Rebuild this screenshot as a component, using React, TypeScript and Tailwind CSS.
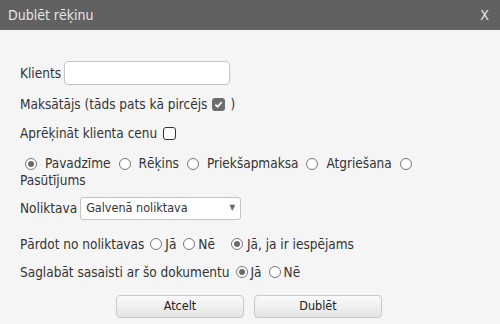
import React from "react";

const font = { fontFamily: '"DejaVu Sans Condensed", "DejaVu Sans", sans-serif' };

function Radio({ checked = false }: { checked?: boolean }) {
  return (
    <span className="inline-grid place-items-center h-[12px] w-[12px] rounded-full border border-[#767676] bg-white align-[-1px]">
      {checked && <span className="h-[6px] w-[6px] rounded-full bg-[#6b6b6b]" />}
    </span>
  );
}

function Check({ checked = false }: { checked?: boolean }) {
  if (checked)
    return (
      <span className="inline-grid place-items-center h-[13px] w-[13px] rounded-[3px] bg-[#6d6d6d] align-[-1px]">
        <svg viewBox="0 0 10 10" className="h-[9px] w-[9px]">
          <path d="M1.5 5.2 L4 7.6 L8.6 2.4" stroke="white" strokeWidth="1.8" fill="none" />
        </svg>
      </span>
    );
  return <span className="inline-block h-[13px] w-[13px] rounded-[3px] border border-[#333] bg-white align-[-1px]" />;
}

export default function App() {
  return (
    <div className="w-[500px] h-[324px] bg-[#f5f5f5] text-[#333] text-[13.5px] overflow-hidden" style={font}>
      <div className="h-[30px] bg-[#616161] flex items-center justify-between px-[8px] text-[#e6e6e6] text-[14px]">
        <span>Dublēt rēķinu</span>
        <span className="pr-[3px]">X</span>
      </div>
      <div className="px-[20px] pt-[31px]">
        <div className="flex items-center gap-[3px] h-[24px]">
          <span>Klients</span>
          <span className="h-[24px] w-[166px] rounded-[4px] border border-[#c4c4c4] bg-white" />
        </div>
        <div className="mt-[7px] h-[24px] flex items-center gap-[5px]">
          <span>Maksātājs (tāds pats kā pircējs</span>
          <Check checked />
          <span>)</span>
        </div>
        <div className="mt-[5px] h-[24px] flex items-center gap-[6px]">
          <span>Aprēķināt klienta cenu</span>
          <Check />
        </div>
        <div className="mt-[10px] pl-[5px] leading-[17px] flex flex-wrap items-center gap-x-[8px] w-[430px]">
          <span className="flex items-center gap-[8px]"><Radio checked /><span>Pavadzīme</span></span>
          <span className="flex items-center gap-[8px]"><Radio /><span>Rēķins</span></span>
          <span className="flex items-center gap-[8px]"><Radio /><span>Priekšapmaksa</span></span>
          <span className="flex items-center gap-[8px]"><Radio /><span>Atgriešana</span></span>
          <Radio />
          <span className="-ml-[5px] w-full">Pasūtījums</span>
        </div>
        <div className="mt-[7px] flex items-center gap-[3px] h-[24px]">
          <span>Noliktava</span>
          <span className="h-[23px] w-[161px] rounded-[3px] border border-[#c4c4c4] bg-white flex items-center justify-between px-[5px] text-[12.5px]">
            <span>Galvenā noliktava</span>
            <span className="text-[8px] text-[#666]">▼</span>
          </span>
        </div>
        <div className="mt-[14px] h-[20px] flex items-center">
          <span>Pārdot no noliktavas</span>
          <span className="ml-[6px] flex items-center gap-[3px]"><Radio /><span>Jā</span></span>
          <span className="ml-[7px] flex items-center gap-[3px]"><Radio /><span>Nē</span></span>
          <span className="ml-[16px] flex items-center gap-[4px]"><Radio checked /><span>Jā, ja ir iespējams</span></span>
        </div>
        <div className="mt-[8px] h-[20px] flex items-center">
          <span>Saglabāt sasaisti ar šo dokumentu</span>
          <span className="ml-[6px] flex items-center gap-[3px]"><Radio checked /><span>Jā</span></span>
          <span className="ml-[7px] flex items-center gap-[3px]"><Radio /><span>Nē</span></span>
        </div>
        <div className="mt-[13px] flex justify-center gap-[10px] pr-[2px]">
          <button className="h-[23px] w-[128px] rounded-[4px] border border-[#c8c8c8] bg-gradient-to-b from-[#fafafa] to-[#e4e4e4] text-[12.5px] text-[#222]">Atcelt</button>
          <button className="h-[23px] w-[128px] rounded-[4px] border border-[#c8c8c8] bg-gradient-to-b from-[#fafafa] to-[#e4e4e4] text-[12.5px] text-[#222]">Dublēt</button>
        </div>
      </div>
    </div>
  );
}
